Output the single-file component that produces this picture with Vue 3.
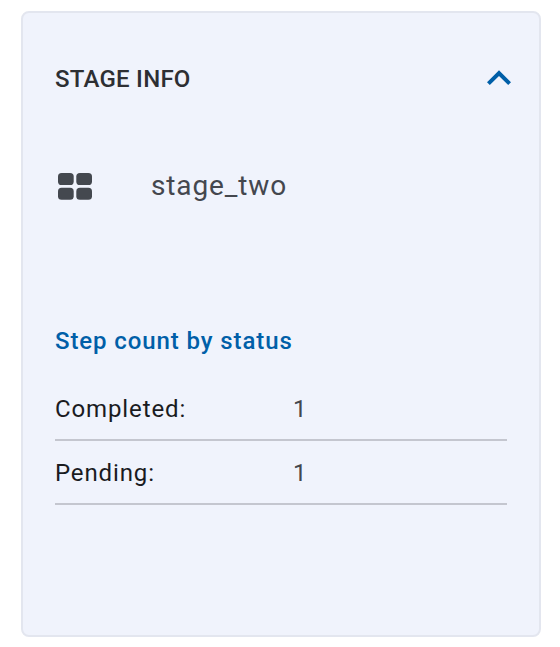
<script setup>
const steps = [
  { status: 'Completed', count: 1 },
  { status: 'Pending', count: 1 },
]
</script>

<template>
  <main class="page">
    <section class="card">
      <header class="head">
        <h2>STAGE INFO</h2>
        <svg class="chevron" width="24" height="18" viewBox="0 0 24 18"><path d="M12 1.3 24 13.3 21.2 16.1 12 6.9 2.8 16.1 0 13.3Z" fill="#005fa8" /></svg>
      </header>
      <div class="stage">
        <svg width="34" height="27" viewBox="0 0 34 27" fill="#44484f">
          <rect width="15.7" height="12" rx="3.6" /><rect x="18.3" width="15.7" height="12" rx="3.6" />
          <rect y="14.8" width="15.7" height="12" rx="3.6" /><rect x="18.3" y="14.8" width="15.7" height="12" rx="3.6" />
        </svg>
        <span class="name">stage_two</span>
      </div>
      <h3>Step count by status</h3>
      <dl>
        <div v-for="s in steps" :key="s.status" class="row">
          <dt>{{ s.status }}:</dt><dd>{{ s.count }}</dd>
        </div>
      </dl>
    </section>
  </main>
</template>

<style>
body { background: #fff; }
</style>
<style scoped>
* { box-sizing: border-box; margin: 0; }
.page { height: 647px; padding: 11px 19px 10px 21px; font-family: Roboto, sans-serif; }
.card { height: 626px; border: 2px solid #e3e6ef; border-radius: 8px; background: #f0f3fc; padding: 50px 28px 0 32px; }
.head { display: flex; justify-content: space-between; align-items: center; height: 32px; }
.chevron { margin-bottom: 2px; }
h2 { font-size: 24px; line-height: 32px; font-weight: 500; letter-spacing: .24px; color: #2d2f33; }
.stage { display: flex; align-items: center; height: 40px; margin-top: 71px; padding-left: 3px; }
.name { margin-left: 59px; padding-bottom: 2px; font-size: 28px; letter-spacing: .88px; color: #44474e; }
h3 { margin-top: 119px; font-size: 24px; line-height: 32px; font-weight: 500; letter-spacing: .9px; color: #005fa8; }
dl { margin: 20px 4px 0 0; }
.row { display: grid; grid-template-columns: 238px 1fr; height: 64px; line-height: 64px; font-size: 24px; letter-spacing: .88px; border-bottom: 2px solid #c4c6cf; }
dt { color: #1a1b1f; }
dd { color: #44474e; }
</style>
